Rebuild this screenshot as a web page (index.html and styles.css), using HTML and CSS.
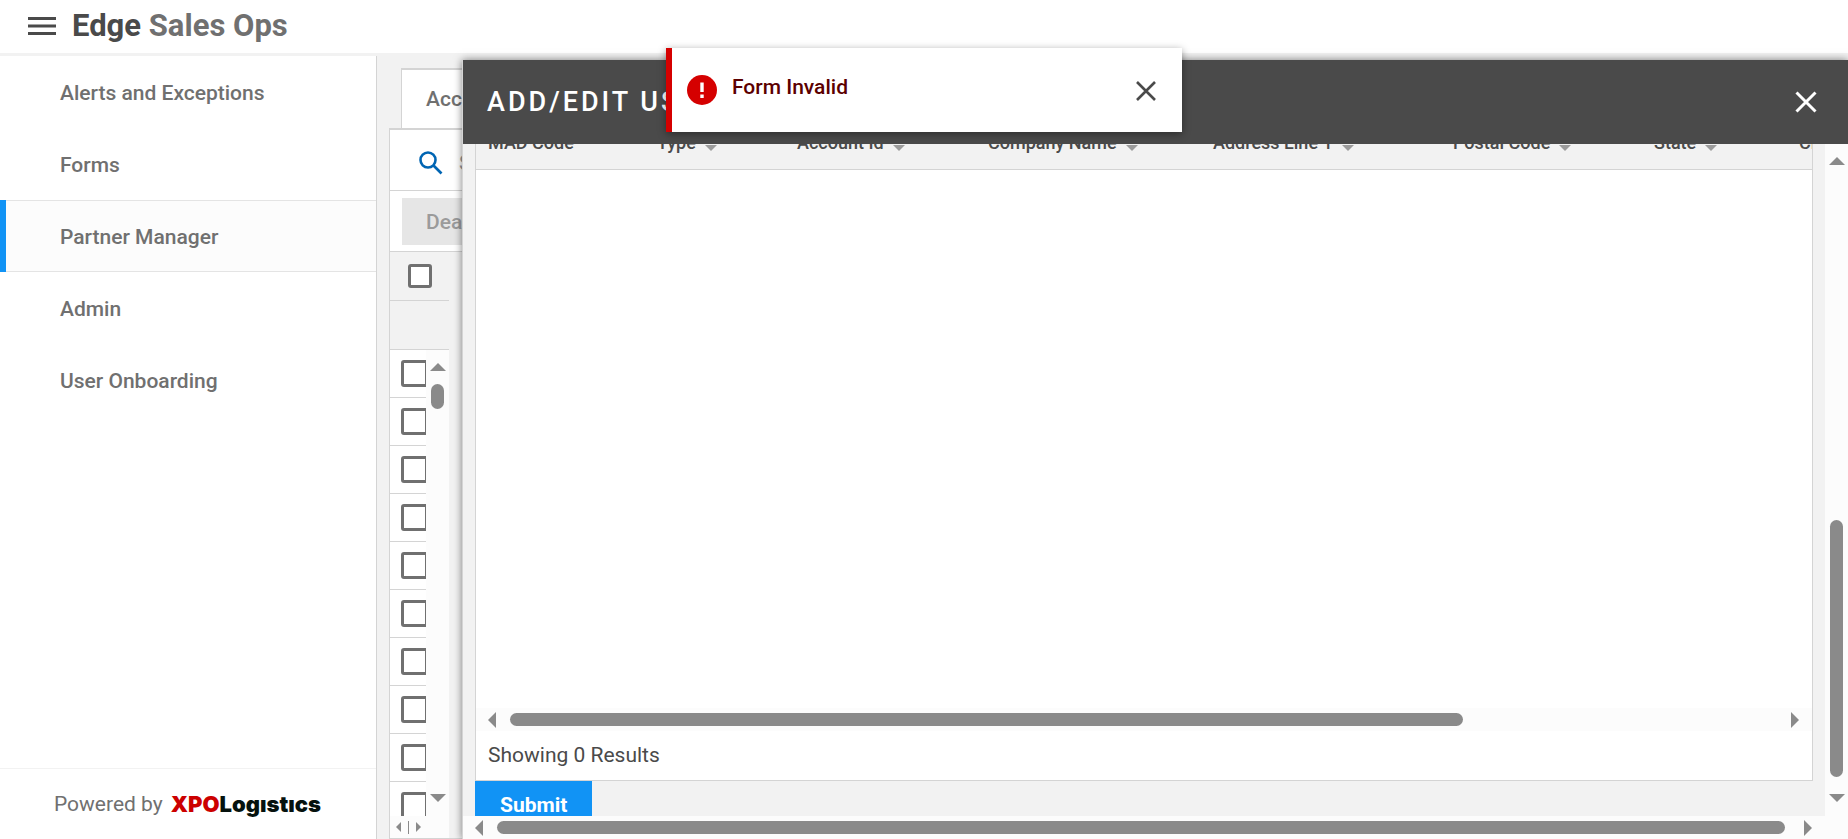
FILE: index.html
```html
<!DOCTYPE html>
<html lang="en">
<head>
<meta charset="utf-8">
<title>Edge Sales Ops</title>
<link rel="stylesheet" href="styles.css">
</head>
<body>
<header class="topbar">
  <button class="icon-button" aria-label="Toggle menu">
    <svg width="28" height="18" viewBox="0 0 28 18" fill="#4a4a4a"><path d="M0 0h28v3H0zM0 7.5h28v3H0zM0 15h28v3H0z"/></svg>
  </button>
  <h1 class="brand"><span class="brand-name">Edge</span> Sales Ops</h1>
</header>

<div class="shell">
  <aside class="sidebar">
    <nav class="nav">
      <a class="nav-item" href="#alerts">Alerts and Exceptions</a>
      <a class="nav-item" href="#forms">Forms</a>
      <a class="nav-item active" href="#partner" aria-current="page">Partner Manager</a>
      <a class="nav-item" href="#admin">Admin</a>
      <a class="nav-item" href="#onboarding">User Onboarding</a>
    </nav>
    <footer class="powered">
      <span>Powered by</span>
      <span class="logo"><span class="logo-red">XPO</span>Logıstıcs</span>
    </footer>
  </aside>

  <main class="content">
    <button class="tab">Acc</button>
    <section class="panel">
      <div class="search">
        <svg width="24" height="24" viewBox="0 0 24 24" fill="none" stroke="#0065b3" stroke-width="2.6"><circle cx="9" cy="9" r="7.5"/><path d="M14.5 14.5l8 8"/></svg>
        <input class="search-input" type="text" placeholder="Search" aria-label="Search">
      </div>
      <div class="actions"><button class="disabled-button" disabled>Deactivate</button></div>
      <div class="grid">
        <div class="grid-head"><input class="check" type="checkbox" aria-label="Select all"></div>
        <div class="grid-filter"></div>
        <div class="grid-body">
          <div class="grid-rows">
            <div class="grid-row"><input class="check large" type="checkbox" aria-label="Select row 1"></div>
            <div class="grid-row"><input class="check large" type="checkbox" aria-label="Select row 2"></div>
            <div class="grid-row"><input class="check large" type="checkbox" aria-label="Select row 3"></div>
            <div class="grid-row"><input class="check large" type="checkbox" aria-label="Select row 4"></div>
            <div class="grid-row"><input class="check large" type="checkbox" aria-label="Select row 5"></div>
            <div class="grid-row"><input class="check large" type="checkbox" aria-label="Select row 6"></div>
            <div class="grid-row"><input class="check large" type="checkbox" aria-label="Select row 7"></div>
            <div class="grid-row"><input class="check large" type="checkbox" aria-label="Select row 8"></div>
            <div class="grid-row"><input class="check large" type="checkbox" aria-label="Select row 9"></div>
            <div class="grid-row"><input class="check large" type="checkbox" aria-label="Select row 10"></div>
          </div>
          <div class="vbar grid-vbar"><i class="arrow up"></i><i class="thumb"></i><i class="arrow down"></i></div>
        </div>
        <div class="mini-bar"><i class="mini left"></i><i class="mini-thumb"></i><i class="mini right"></i></div>
      </div>
    </section>
  </main>
</div>

<section class="modal" role="dialog" aria-labelledby="modal-title">
  <header class="modal-head">
    <h2 class="modal-title" id="modal-title">ADD/EDIT USER</h2>
    <button class="icon-button" aria-label="Close dialog">
      <svg width="22" height="22" viewBox="0 0 22 22" stroke="#fff" stroke-width="3"><path d="M1.5 1.5l19 19M20.5 1.5l-19 19"/></svg>
    </button>
  </header>
  <div class="modal-main">
    <div class="modal-view">
      <div class="modal-scroll">
        <div class="card">
          <div class="table-wrap">
            <table class="table">
              <colgroup><col class="c-mad"><col class="c-type"><col class="c-id"><col class="c-name"><col class="c-addr"><col class="c-zip"><col class="c-state"><col class="c-city"></colgroup>
              <thead>
                <tr>
                  <th>MAD Code</th>
                  <th>Type<i class="sort"></i></th>
                  <th>Account Id<i class="sort"></i></th>
                  <th>Company Name<i class="sort"></i></th>
                  <th>Address Line 1<i class="sort"></i></th>
                  <th>Postal Code<i class="sort"></i></th>
                  <th>State<i class="sort"></i></th>
                  <th>City</th>
                </tr>
              </thead>
            </table>
          </div>
          <div class="hbar card-hbar"><i class="arrow left"></i><span class="track"><i class="thumb card-thumb"></i></span><i class="arrow right"></i></div>
          <p class="results">Showing 0 Results</p>
        </div>
        <div class="submit-row"><button class="submit">Submit</button></div>
      </div>
      <div class="vbar"><i class="arrow up"></i><span class="vtrack"><i class="thumb modal-vthumb"></i></span><i class="arrow down"></i></div>
    </div>
    <div class="hbar modal-hbar"><i class="arrow left"></i><span class="track"><i class="thumb"></i></span><i class="arrow right"></i></div>
  </div>
</section>

<div class="toast" role="alert">
  <svg width="30" height="30" viewBox="0 0 30 30"><circle cx="15" cy="15" r="15" fill="#d50000"/><path d="M13.3 7.5h3.4v9.5h-3.4zM13.3 19.5h3.4v3.4h-3.4z" fill="#fff"/></svg>
  <p class="toast-text">Form Invalid</p>
  <button class="icon-button" aria-label="Dismiss">
    <svg width="20" height="22" viewBox="0 0 20 22" stroke="#4a4a4a" stroke-width="2.6"><path d="M1 3l18 18M19 3L1 21"/></svg>
  </button>
</div>
</body>
</html>
```

FILE: styles.css
```css
* { box-sizing: border-box; }
body {
  margin: 0;
  height: 100vh;
  display: flex;
  flex-direction: column;
  overflow: hidden;
  position: relative;
  background: #f2f2f2;
  color: #4a4a4a;
  font: 21px/24px Roboto, "Liberation Sans", sans-serif;
}
h1, h2, p { margin: 0; }
button, input { font: inherit; }
svg { display: block; flex: none; }
.icon-button { border: 0; padding: 0; background: none; }

.topbar {
  flex: none;
  height: 56px;
  display: flex;
  align-items: center;
  gap: 16px;
  padding: 0 28px 1px;
  background: #fff;
  border-bottom: 3px solid #f2f2f2;
}
.brand { font-size: 31px; line-height: 36px; font-weight: 700; color: #707070; }
.brand-name { color: #4a4a4a; }

.shell { flex: 1; min-height: 0; display: flex; }
.sidebar {
  flex: none;
  width: 377px;
  display: flex;
  flex-direction: column;
  justify-content: space-between;
  background: #fff;
  border-right: 1px solid #d4d4d4;
}
.nav-item {
  display: flex;
  align-items: center;
  height: 72px;
  padding: 2px 0 0 60px;
  color: #707070;
  font-weight: 500;
  text-decoration: none;
}
.nav-item.active {
  padding-left: 54px;
  background: #fcfcfc;
  border-left: 6px solid #1193f5;
  box-shadow: inset 0 1px #e4e4e4, inset 0 -1px #e4e4e4;
}
.powered {
  display: flex;
  align-items: center;
  gap: 8px;
  height: 71px;
  padding-left: 54px;
  border-top: 1px solid #f2f2f2;
  color: #707070;
}
.logo { font: 900 22px/28px Inter, sans-serif; color: #06120e; }
.logo-red { color: #cc0000; }

.content {
  flex: 1;
  min-width: 0;
  padding: 12px 12px 0;
  display: flex;
  flex-direction: column;
  align-items: flex-start;
}
.tab {
  flex: none;
  height: 60px;
  margin-left: 12px;
  padding: 0 24px;
  border: 1px solid #d4d4d4;
  border-width: 2px 1px 0;
  background: #fff;
  color: #707070;
  font-weight: 500;
}
.panel {
  flex: 1;
  min-height: 0;
  align-self: stretch;
  display: flex;
  flex-direction: column;
  border: 1px solid #d4d4d4;
  border-top-width: 2px;
}
.search {
  flex: none;
  display: flex;
  align-items: center;
  gap: 16px;
  height: 61px;
  padding: 5px 0 0 29px;
  background: #fff;
  border-bottom: 1px solid #d4d4d4;
}
.search-input { border: 0; padding: 0; background: none; outline: 0; }
.search-input::placeholder { color: #9b9b9b; }
.actions { flex: none; height: 61px; padding: 7px 12px; background: #fff; border-bottom: 1px solid #d4d4d4; }
.disabled-button { height: 47px; padding: 0 24px; border: 0; background: #e6e6e6; color: #9b9b9b; font-weight: 500; }

.grid { flex: 1; min-height: 0; width: 59px; display: flex; flex-direction: column; }
.grid-head, .grid-filter { flex: none; height: 49px; border-bottom: 1px solid #d4d4d4; }
.grid-head { display: flex; align-items: center; padding-left: 18px; }
.check {
  appearance: none;
  flex: none;
  width: 24px;
  height: 24px;
  margin: 0;
  border: 3px solid #707070;
  border-radius: 3px;
  background: #fff;
}
.check.large { width: 27px; height: 27px; }
.grid-body { flex: 1; min-height: 0; display: flex; }
.grid-rows { flex: 1; min-width: 0; overflow: hidden; background: #fff; }
.grid-row { display: flex; align-items: center; height: 48px; padding-left: 11px; border-bottom: 1px solid #d4d4d4; }
.mini-bar { flex: none; height: 22px; display: flex; align-items: center; gap: 7px; padding-left: 6px; background: #fcfcfc; }
.mini { border: 5px solid transparent; }
.mini.left { border-left: 0; border-right-color: #8a8a8a; }
.mini.right { border-right: 0; border-left-color: #8a8a8a; }
.mini-thumb { width: 1px; height: 13px; background: #8a8a8a; }

.vbar {
  flex: none;
  width: 23px;
  display: flex;
  flex-direction: column;
  align-items: center;
  padding: 13px 0 14px;
  background: #fcfcfc;
}
.hbar { flex: none; height: 23px; display: flex; align-items: center; background: #fcfcfc; }
.arrow { flex: none; border: 0 solid transparent; }
.arrow.up { border-width: 0 8px 8px; border-bottom-color: #8a8a8a; }
.arrow.down { border-width: 8px 8px 0; border-top-color: #8a8a8a; }
.arrow.left { border-width: 8px 8px 8px 0; border-right-color: #8a8a8a; }
.arrow.right { border-width: 8px 0 8px 8px; border-left-color: #8a8a8a; }
.thumb { display: block; height: 13px; border-radius: 7px; background: #8a8a8a; }
.grid-vbar .thumb { width: 13px; height: 25px; margin: 13px 0 auto; }
.track { flex: 1; margin: 0 19px 0 14px; }
.vtrack { flex: 1; margin: 14px 0 17px; display: flex; flex-direction: column; justify-content: flex-end; }

.modal {
  position: absolute;
  top: 60px;
  right: 0;
  bottom: 0;
  width: 75%;
  display: flex;
  flex-direction: column;
  background: #f2f2f2;
  border-left: 1px solid #d4d4d4;
  box-shadow: 0 0 8px rgba(0, 0, 0, 0.5);
}
.modal-head {
  flex: none;
  height: 84px;
  display: flex;
  align-items: center;
  justify-content: space-between;
  padding: 0 31px 1px 24px;
  background: #4a4a4a;
  color: #fff;
}
.modal-title { font-size: 27px; line-height: 32px; font-weight: 500; letter-spacing: 3px; }
.modal-main { flex: 1; min-height: 0; display: flex; flex-direction: column; }
.modal-view { flex: 1; min-height: 0; display: flex; }
.modal-scroll {
  flex: 1;
  min-width: 0;
  overflow: hidden;
  display: flex;
  flex-direction: column;
  padding: 0 12px;
}
.card {
  flex: 1;
  min-height: 0;
  margin-top: -24px;
  display: flex;
  flex-direction: column;
  background: #fff;
  border: 1px solid #d4d4d4;
}
.table-wrap { flex: 1; min-height: 0; overflow: hidden; }
.table { width: 1511px; table-layout: fixed; border-collapse: collapse; background: #f2f2f2; }
.table th {
  height: 48px;
  padding: 0 0 3px 12px;
  border-bottom: 1px solid #d4d4d4;
  text-align: left;
  font-size: 18px;
  font-weight: 500;
  white-space: nowrap;
}
.c-mad { width: 169px; }
.c-type { width: 140px; }
.c-id { width: 191px; }
.c-name { width: 225px; }
.c-addr { width: 240px; }
.c-zip { width: 201px; }
.c-state { width: 145px; }
.c-city { width: 200px; }
.sort {
  display: inline-block;
  margin-left: 9px;
  vertical-align: -2px;
  border: 6px solid transparent;
  border-top-color: #9b9b9b;
  border-bottom: 0;
}
.card-hbar { padding: 0 13px 0 12px; }
.card-thumb { width: 75.5%; }
.results { flex: none; height: 49px; padding: 0 12px; line-height: 48px; }
.submit-row { flex: none; height: 35px; }
.submit { height: 47px; padding: 0 25px; border: 0; background: #1193f5; color: #fff; font-weight: 700; }
.modal-hbar { padding: 0 36px 0 12px; }
.modal-vthumb { width: 13px; height: 43%; }

.toast {
  position: absolute;
  top: 48px;
  left: 50%;
  margin-left: -258px;
  width: 516px;
  height: 84px;
  display: flex;
  align-items: center;
  gap: 15px;
  padding: 0 26px 0 15px;
  background: #fff;
  border-left: 6px solid #d50000;
  box-shadow: 0 2px 8px rgba(0, 0, 0, 0.4);
  color: #5c0000;
}
.toast-text { flex: 1; padding-bottom: 6px; font-weight: 500; }
```
